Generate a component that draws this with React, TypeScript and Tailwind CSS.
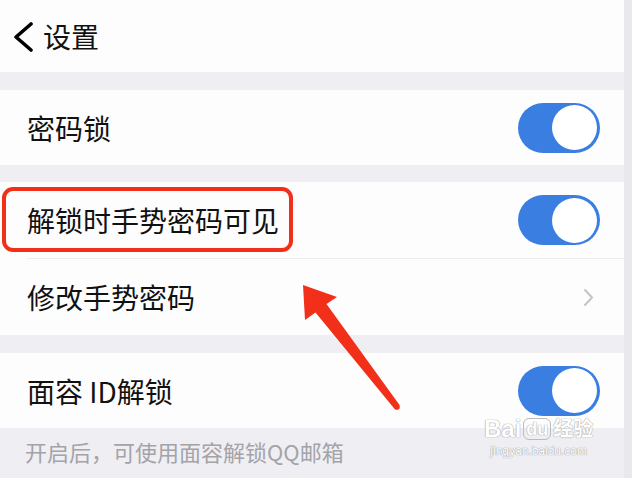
const font = { fontFamily: '"Noto Sans CJK SC", "Noto Sans", sans-serif' };

function Toggle() {
  return (
    <div className="flex h-[50px] w-[82px] items-center justify-end rounded-full bg-[#3a7ee2] px-[3px]">
      <div className="h-[45px] w-[45px] rounded-full bg-white" />
    </div>
  );
}

function Gap({ h }: { h: string }) {
  return <div className={`${h} bg-[#efeef3]`} />;
}

export default function App() {
  return (
    <div className="relative flex h-[478px] w-[632px] overflow-hidden bg-[#efeef3]" style={font}>
      <div className="flex w-[624px] flex-col">
        <header className="flex h-[72px] items-center bg-[#fdfdfe] pl-[11px]">
          <svg width="24" height="30" viewBox="0 0 24 30" className="mt-[1px]">
            <polyline points="20,2 5,15 20,28" fill="none" stroke="#000" strokeWidth="3.6" strokeLinecap="round" strokeLinejoin="round" />
          </svg>
          <span className="ml-[8px] text-[28px] text-[#111]">设置</span>
        </header>
        <Gap h="h-[18px]" />
        <div className="flex h-[75px] items-center justify-between bg-[#fdfdfe] pl-[27px] pr-[24px]">
          <span className="text-[28px] text-[#111]">密码锁</span>
          <Toggle />
        </div>
        <Gap h="h-[17px]" />
        <div className="relative flex h-[76px] items-center justify-between bg-[#fdfdfe] pl-[27px] pr-[24px]">
          <span className="text-[28px] text-[#111]">解锁时手势密码可见</span>
          <Toggle />
          <div className="absolute left-[2px] top-[5px] h-[65px] w-[291px] rounded-[11px] border-[4px] border-[#f2301a]" />
        </div>
        <div className="flex h-[1px] bg-[#fdfdfe] pl-[27px]">
          <div className="flex-1 bg-[#ececef]" />
        </div>
        <div className="flex h-[76px] items-center justify-between bg-[#fdfdfe] pl-[27px] pr-[30px]">
          <span className="text-[28px] text-[#111]">修改手势密码</span>
          <svg width="11" height="19" viewBox="0 0 11 19">
            <polyline points="2,2 9,9.5 2,17" fill="none" stroke="#c4c4c8" strokeWidth="2" strokeLinecap="round" strokeLinejoin="round" />
          </svg>
        </div>
        <Gap h="h-[18px]" />
        <div className="flex h-[75px] items-center justify-between bg-[#fdfdfe] pl-[27px] pr-[24px]">
          <span className="text-[28px] text-[#111]">面容 ID解锁</span>
          <Toggle />
        </div>
        <div className="flex flex-1 items-center pl-[25px] pb-[3px]">
          <span className="text-[22px] text-[#a3a3a8]">开启后，可使用面容解锁QQ邮箱</span>
        </div>
      </div>
      <div className="w-[8px] bg-[#e9e8ed]" />

      <svg className="pointer-events-none absolute left-0 top-0" width="632" height="478">
        <path
          d="M303,285 L337,297 L326.5,304 L399.5,405 Q401,411 395,409.5 L315.5,312.5 L305,320 Z"
          fill="#f2301a"
        />
      </svg>

      <div className="pointer-events-none absolute left-[484px] top-[414px] flex flex-col items-center text-white" style={{ fontFamily: '"Liberation Sans", "Noto Sans CJK SC", sans-serif', textShadow: "0 0 1px #9a9a9a, 0 0 1px #9a9a9a" }}>
        <div className="flex items-center text-[24px] font-bold leading-[30px]">
          <span>Bai</span>
          <span className="mx-[2px] rounded-[6px] border border-[#bbb] px-[2px] text-[18px] leading-[20px]">du</span>
          <span className="text-[20px]">经验</span>
        </div>
        <span className="text-[12px] leading-[14px]">jingyan.baidu.com</span>
      </div>
    </div>
  );
}
